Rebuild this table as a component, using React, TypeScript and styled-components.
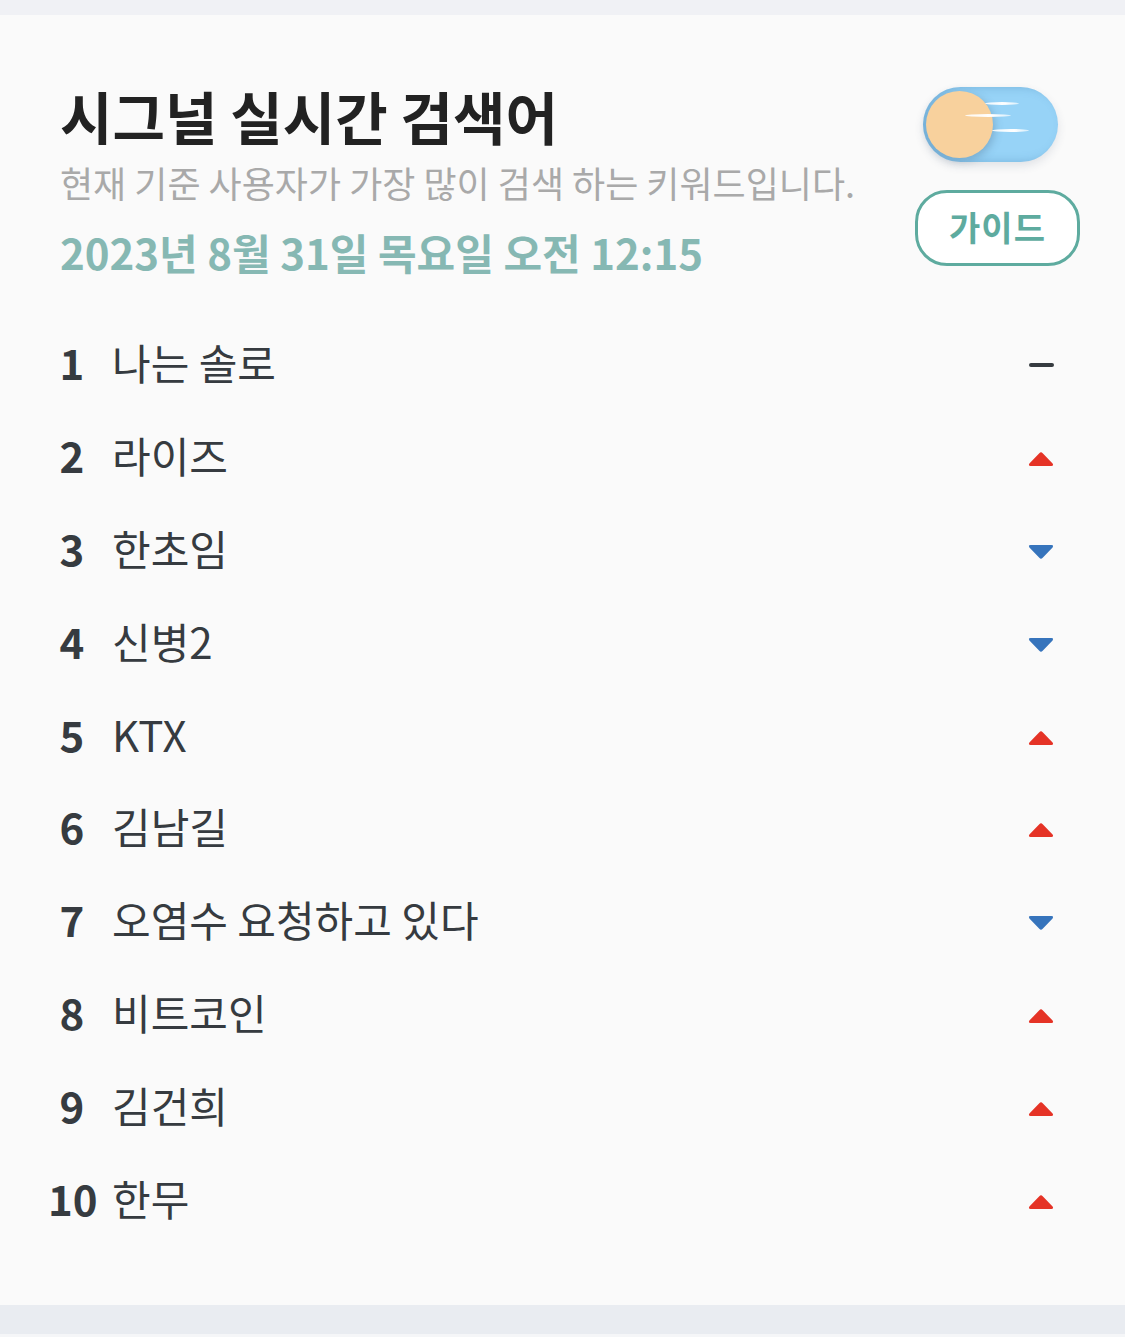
import React from 'react';
import styled, { createGlobalStyle } from 'styled-components';

const Global = createGlobalStyle`
  html, body { margin: 0; padding: 0; background: #f5f6f8; }
  body { font-family: "Noto Sans CJK KR", "Noto Sans", sans-serif; -webkit-font-smoothing: antialiased; }
  * { box-sizing: border-box; }
`;

const Page = styled.div`
  display: flex;
  flex-direction: column;
  width: 1125px;
  height: 1337px;
  background: #f5f6f8;
`;

const TopBand = styled.div`
  height: 15px;
  background: #f0f1f5;
  flex: none;
`;

const Card = styled.main`
  flex: none;
  height: 1290px;
  background: #fafafa;
  padding: 66px 45px 0 46px;
  display: flex;
  flex-direction: column;
`;

const BottomBand = styled.div`
  flex: none;
  height: 29px;
  background: #e9ecf1;
`;

const Header = styled.header`
  display: flex;
  justify-content: space-between;
  align-items: flex-start;
  padding-left: 14px;
`;

const TitleBlock = styled.div`
  display: flex;
  flex-direction: column;
`;

const Title = styled.h1`
  margin: 0;
  font-size: 57px;
  line-height: 68px;
  font-weight: 700;
  color: #222222;
`;

const Subtitle = styled.p`
  margin: 10px 0 0;
  font-size: 36px;
  line-height: 46px;
  font-weight: 400;
  color: #a9a9a9;
  white-space: nowrap;
`;

const DateLine = styled.p`
  margin: 20px 0 0;
  font-size: 42px;
  line-height: 54px;
  font-weight: 700;
  color: #86b8b3;
  white-space: nowrap;
`;

const Actions = styled.div`
  display: flex;
  flex-direction: column;
  align-items: flex-end;
  gap: 28px;
  padding-top: 6px;
`;

const Toggle = styled.button`
  position: relative;
  width: 135px;
  height: 75px;
  margin-right: 22px;
  border: none;
  padding: 0;
  border-radius: 38px;
  background: #97d3f7;
  box-shadow: inset 6px 0 10px rgba(60, 120, 170, 0.35), 0 4px 10px rgba(40, 60, 90, 0.12);
  cursor: pointer;
`;

const Knob = styled.span`
  position: absolute;
  left: 3px;
  top: 4px;
  width: 67px;
  height: 67px;
  border-radius: 50%;
  background: #f8d19d;
  box-shadow: 2px 3px 8px rgba(60, 90, 120, 0.3);
`;

const Streak = styled.span<{ $l: number; $t: number; $w: number }>`
  position: absolute;
  left: ${p => p.$l}px;
  top: ${p => p.$t}px;
  width: ${p => p.$w}px;
  height: 3px;
  border-radius: 50%;
  background: linear-gradient(90deg, rgba(255,255,255,0.85), #ffffff 60%, rgba(255,255,255,0.6));
`;

const GuideButton = styled.button`
  width: 165px;
  height: 76px;
  border: 3px solid #5eab9f;
  border-radius: 32px;
  background: #ffffff;
  color: #5eab9f;
  font-family: inherit;
  font-size: 34px;
  font-weight: 700;
  letter-spacing: 1px;
  padding: 0 0 4px;
  cursor: pointer;
`;

const List = styled.ol`
  list-style: none;
  margin: 37px 0 0;
  padding: 0 26px 0 2px;
`;

const Row = styled.li`
  height: 92.8px;
  display: flex;
  align-items: center;
`;

const Rank = styled.span`
  width: 48px;
  flex: none;
  text-align: center;
  font-size: 42px;
  font-weight: 700;
  color: #363b40;
  line-height: 1;
`;

const Keyword = styled.span`
  flex: 1;
  margin-left: 16px;
  font-size: 42px;
  font-weight: 400;
  color: #363b40;
  line-height: 1;
`;

const Trend = styled.span`
  width: 26px;
  height: 16px;
  margin-top: 8px;
  flex: none;
  display: flex;
  align-items: center;
  justify-content: center;
`;

type Dir = 'same' | 'up' | 'down';

const TrendIcon: React.FC<{ dir: Dir }> = ({ dir }) => {
  if (dir === 'same') {
    return (
      <svg width="26" height="16" viewBox="0 0 26 16">
        <line x1="3" y1="7" x2="24" y2="7" stroke="#363b40" strokeWidth="4" strokeLinecap="round" />
      </svg>
    );
  }
  if (dir === 'up') {
    return (
      <svg width="26" height="16" viewBox="0 0 26 16">
        <path d="M11.3 2.2 Q13 0.4 14.7 2.2 L24.6 12.6 Q26 15 23.4 15 L2.6 15 Q0 15 1.4 12.6 Z" fill="#e53326" />
      </svg>
    );
  }
  return (
    <svg width="26" height="16" viewBox="0 0 26 16">
      <path d="M11.3 13.8 Q13 15.6 14.7 13.8 L24.6 3.4 Q26 1 23.4 1 L2.6 1 Q0 1 1.4 3.4 Z" fill="#3674bc" />
    </svg>
  );
};

const items: { rank: number; word: string; dir: Dir }[] = [
  { rank: 1, word: '나는 솔로', dir: 'same' },
  { rank: 2, word: '라이즈', dir: 'up' },
  { rank: 3, word: '한초임', dir: 'down' },
  { rank: 4, word: '신병2', dir: 'down' },
  { rank: 5, word: 'KTX', dir: 'up' },
  { rank: 6, word: '김남길', dir: 'up' },
  { rank: 7, word: '오염수 요청하고 있다', dir: 'down' },
  { rank: 8, word: '비트코인', dir: 'up' },
  { rank: 9, word: '김건희', dir: 'up' },
  { rank: 10, word: '한무', dir: 'up' },
];

export default function App() {
  return (
    <Page>
      <Global />
      <TopBand />
      <Card>
        <Header>
          <TitleBlock>
            <Title>시그널 실시간 검색어</Title>
            <Subtitle>현재 기준 사용자가 가장 많이 검색 하는 키워드입니다.</Subtitle>
            <DateLine>2023년 8월 31일 목요일 오전 12:15</DateLine>
          </TitleBlock>
          <Actions>
            <Toggle aria-label="theme toggle">
              <Knob />
              <Streak $l={62} $t={15} $w={34} />
              <Streak $l={42} $t={27} $w={46} />
              <Streak $l={69} $t={42} $w={37} />
            </Toggle>
            <GuideButton>가이드</GuideButton>
          </Actions>
        </Header>
        <List>
          {items.map(it => (
            <Row key={it.rank}>
              <Rank>{it.rank}</Rank>
              <Keyword>{it.word}</Keyword>
              <Trend>
                <TrendIcon dir={it.dir} />
              </Trend>
            </Row>
          ))}
        </List>
      </Card>
      <BottomBand />
    </Page>
  );
}
